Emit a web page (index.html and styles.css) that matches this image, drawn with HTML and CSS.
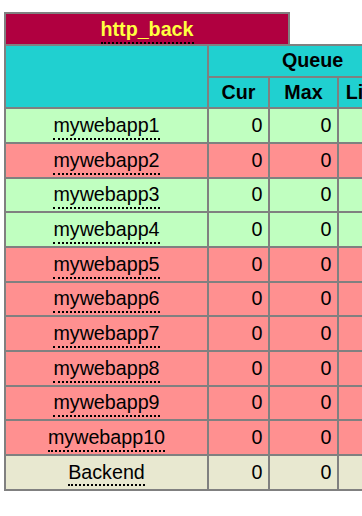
FILE: index.html
```html
<!DOCTYPE html>
<html lang="en">
<head>
<meta charset="utf-8">
<title>http_back</title>
<link rel="stylesheet" href="styles.css">
</head>
<body>
<div class="pxname"><span class="tip">http_back</span></div>
<table class="tbl">
  <colgroup>
    <col class="c-name">
    <col class="c-cur">
    <col class="c-max">
    <col class="c-lim">
  </colgroup>
  <thead>
    <tr class="titre h1">
      <th rowspan="2"></th>
      <th colspan="3" class="grp">Queue</th>
    </tr>
    <tr class="titre h2">
      <th>Cur</th><th>Max</th><th class="lim">Limit</th>
    </tr>
  </thead>
  <tbody>
    <tr class="up"><td class="ac"><span class="tip">mywebapp1</span></td><td>0</td><td>0</td><td></td></tr>
    <tr class="down"><td class="ac"><span class="tip">mywebapp2</span></td><td>0</td><td>0</td><td></td></tr>
    <tr class="up"><td class="ac"><span class="tip">mywebapp3</span></td><td>0</td><td>0</td><td></td></tr>
    <tr class="up"><td class="ac"><span class="tip">mywebapp4</span></td><td>0</td><td>0</td><td></td></tr>
    <tr class="down"><td class="ac"><span class="tip">mywebapp5</span></td><td>0</td><td>0</td><td></td></tr>
    <tr class="down"><td class="ac"><span class="tip">mywebapp6</span></td><td>0</td><td>0</td><td></td></tr>
    <tr class="down"><td class="ac"><span class="tip">mywebapp7</span></td><td>0</td><td>0</td><td></td></tr>
    <tr class="down"><td class="ac"><span class="tip">mywebapp8</span></td><td>0</td><td>0</td><td></td></tr>
    <tr class="down"><td class="ac"><span class="tip">mywebapp9</span></td><td>0</td><td>0</td><td></td></tr>
    <tr class="down"><td class="ac"><span class="tip">mywebapp10</span></td><td>0</td><td>0</td><td></td></tr>
    <tr class="backend"><td class="ac"><span class="tip">Backend</span></td><td>0</td><td>0</td><td></td></tr>
  </tbody>
</table>
</body>
</html>
```
FILE: styles.css
```css
html, body {
  overflow: hidden;
}
body {
  margin: 0;
  padding: 12px 0 0 4px;
  background: #ffffff;
  color: #000000;
  font-family: "Liberation Sans", Arial, Helvetica, sans-serif;
  font-size: 19.7px;
}
.pxname {
  box-sizing: border-box;
  width: 286px;
  height: 32px;
  border: 2px solid #808080;
  border-bottom: none;
  background: #b00040;
  color: #ffff40;
  font-weight: bold;
  text-align: center;
  line-height: 30px;
  white-space: nowrap;
}
.tip {
  border-bottom: 2px dotted #000000;
  padding-bottom: 1.8px;
}
.tbl {
  table-layout: fixed;
  width: 414px;
  border-collapse: separate;
  border-spacing: 0;
  border-left: 2px solid #808080;
  border-top: 2px solid #808080;
}
.c-name { width: 203px; }
.c-cur { width: 61px; }
.c-max { width: 69px; }
.c-lim { width: 79px; }
.tbl th,
.tbl td {
  border-right: 2px solid #808080;
  border-bottom: 2px solid #808080;
  padding: 0 5.5px;
  white-space: nowrap;
  vertical-align: middle;
}
.tbl td {
  text-align: right;
}
.tbl td.ac {
  text-align: center;
}
.titre th {
  background: #20d0d0;
  color: #000000;
  font-weight: bold;
  text-align: center;
}
.titre th.lim {
  padding-right: 22px;
}
.h1 { height: 31.7px; }
.h2 { height: 31.6px; }
tbody tr { height: 34.67px; }
.up td { background: #c0ffc0; }
.down td { background: #ff9090; }
.backend td { background: #e8e8d0; }
```
